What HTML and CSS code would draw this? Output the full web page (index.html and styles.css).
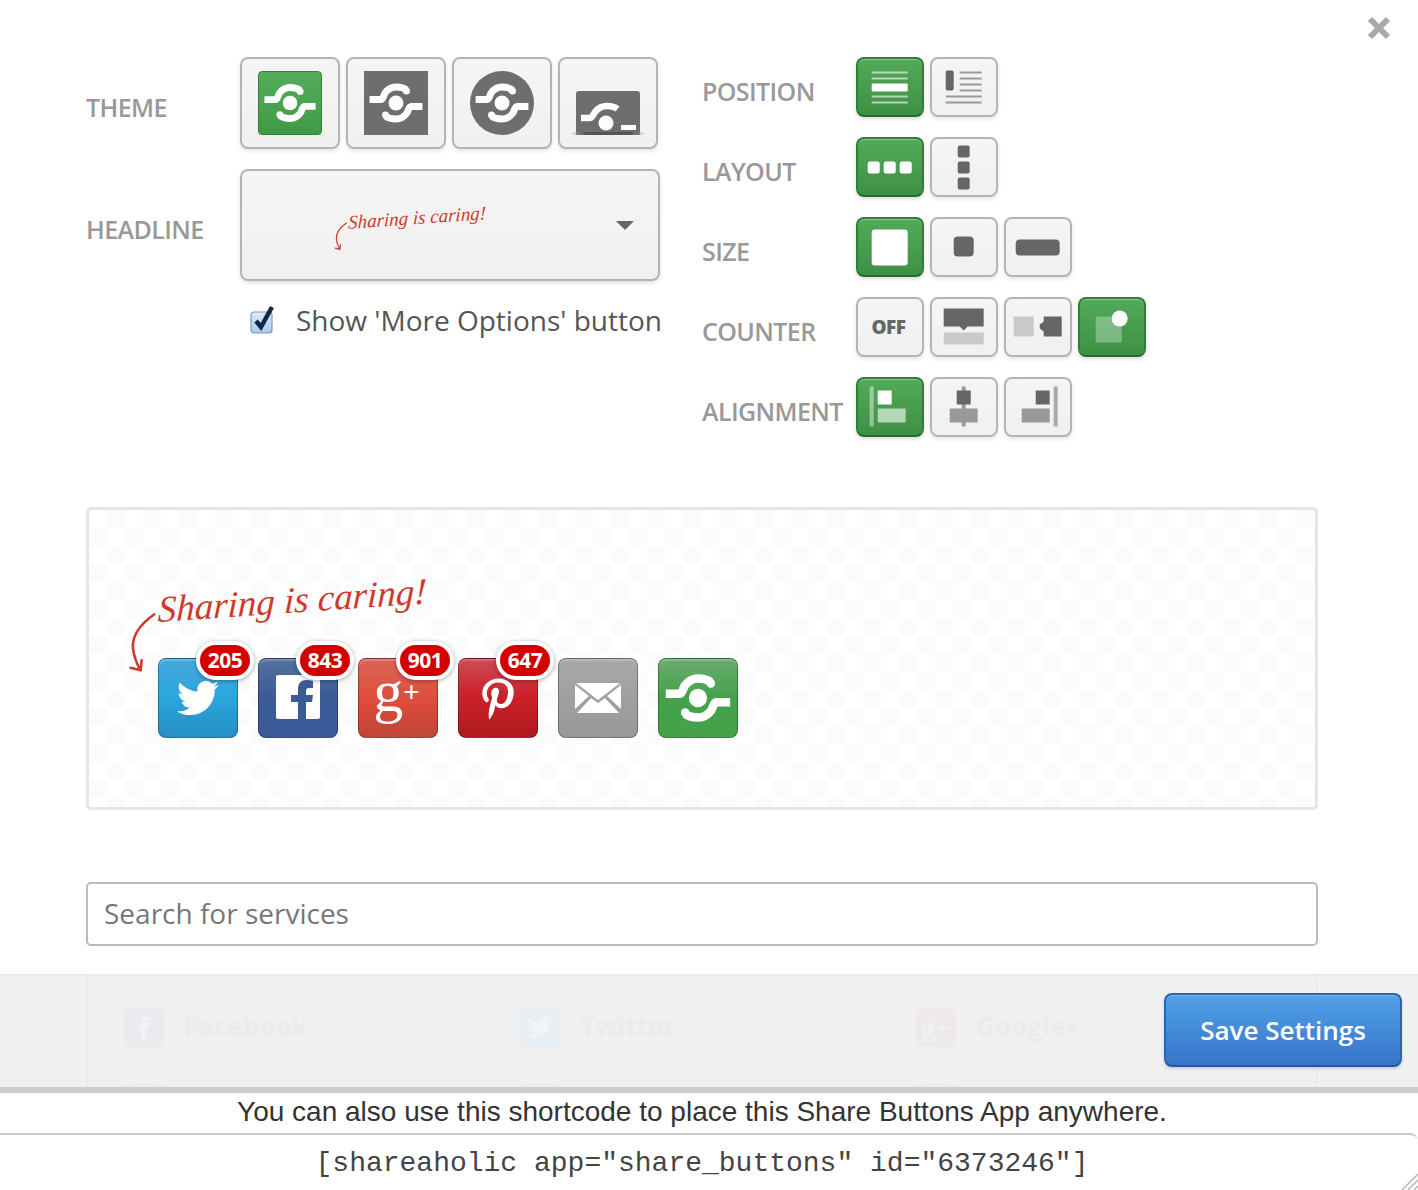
FILE: index.html
```html
<!DOCTYPE html>
<html lang="en">
<head>
    <meta charset="UTF-8">
    <meta name="viewport" content="width=device-width, initial-scale=1.0">
    <title>Share Buttons Settings</title>
    <link rel="stylesheet" href="styles.css">
</head>
<body>

    <svg class="defs" width="0" height="0">
        <symbol id="logo" viewBox="0 0 64 64">
            <g id="logo-half">
                <path d="M5.6 28.6H17C19 28.6 19.5 25 21 22 24 18 28 16 32 16 37 16 40 17 42.5 19" fill="none" stroke="currentColor" stroke-width="7"/>
                <circle cx="42.5" cy="20" r="3.5" fill="currentColor"/>
            </g>
            <use href="#logo-half" transform="rotate(180 32 32)"/>
            <circle cx="32" cy="32" r="7.5" fill="currentColor"/>
        </symbol>
        <symbol id="arrow-path" viewBox="0 0 40 80">
            <path d="M31 5C14 17 4 30 6 46c1 9 4 16 8 24M3 68l12 3 1-12" fill="none" stroke="currentColor" stroke-width="3" stroke-linecap="round" stroke-linejoin="round"/>
        </symbol>
    </svg>

    <svg class="close-icon" width="24" height="24" viewBox="0 0 24 24">
        <path d="M3 3l18 18M21 3L3 21" stroke="#a9a9a9" stroke-width="6"/>
    </svg>

    <div class="settings">
        <div class="settings-left">
            <div class="left-row">
                <div class="label">Theme</div>
                <div class="btn-row">
                    <div class="theme-btn">
                        <svg class="tile tile-green" width="64" height="64"><use href="#logo"/></svg>
                    </div>
                    <div class="theme-btn">
                        <svg class="tile tile-gray" width="64" height="64"><use href="#logo"/></svg>
                    </div>
                    <div class="theme-btn">
                        <svg class="tile tile-gray tile-round" width="64" height="64"><use href="#logo"/></svg>
                    </div>
                    <div class="theme-btn">
                        <svg width="76" height="64" viewBox="-6 0 76 64">
                            <defs>
                                <linearGradient id="stripFade" x1="0" y1="0" x2="1" y2="0">
                                    <stop offset="0" stop-color="#bbb" stop-opacity="0"/>
                                    <stop offset=".2" stop-color="#555"/>
                                    <stop offset=".8" stop-color="#555"/>
                                    <stop offset="1" stop-color="#bbb" stop-opacity="0"/>
                                </linearGradient>
                            </defs>
                            <path d="M0 64V23q0-3 3-3h58q3 0 3 3v41z" fill="#6e6e6e"/>
                            <path d="M5 47H14C16 47 17 44 19 41 22 37 27 35 31 35 36 35 39 36 41.5 38" fill="none" stroke="#fff" stroke-width="6.5"/>
                            <circle cx="30" cy="52" r="7.5" fill="#fff"/>
                            <rect x="45" y="54" width="15" height="5" fill="#fff"/>
                            <rect x="-6" y="61" width="76" height="3" fill="url(#stripFade)"/>
                        </svg>
                    </div>
                </div>
            </div>
            <div class="left-row">
                <div class="label">Headline</div>
                <div class="headline-select">
                    <svg class="mini-arrow" width="16" height="42"><use href="#arrow-path"/></svg>
                    <span class="hand hand-small">Sharing is caring!</span>
                    <span class="caret"></span>
                </div>
            </div>
            <div class="more-options">
                <svg class="checkbox" width="26" height="30" viewBox="0 0 26 30">
                    <defs>
                        <linearGradient id="checkFill" x1="0" y1="0" x2="0" y2="1">
                            <stop offset="0" stop-color="#dfecfa"/>
                            <stop offset="1" stop-color="#a3c9f1"/>
                        </linearGradient>
                    </defs>
                    <rect x="1" y="7" width="21" height="21" rx="3" fill="url(#checkFill)" stroke="#8d97a3" stroke-width="1.2"/>
                    <path d="M6 16l5 6 11-20" fill="none" stroke="#13264a" stroke-width="4.5"/>
                </svg>
                <span>Show 'More Options' button</span>
            </div>
        </div>

        <div class="settings-right">
            <div class="right-row">
                <div class="label">Position</div>
                <div class="opt-btn active">
                    <svg width="64" height="56">
                        <g fill="#fff">
                            <rect x="13" y="12" width="36" height="2" opacity=".6"/>
                            <rect x="13" y="18" width="36" height="2" opacity=".6"/>
                            <rect x="13" y="24" width="36" height="8" rx="1"/>
                            <rect x="13" y="36" width="36" height="2" opacity=".6"/>
                            <rect x="13" y="42" width="36" height="2" opacity=".6"/>
                        </g>
                    </svg>
                </div>
                <div class="opt-btn">
                    <svg width="64" height="56">
                        <rect x="13" y="11" width="8" height="20" rx="2" fill="#666"/>
                        <g fill="#999">
                            <rect x="27" y="12" width="22" height="2"/>
                            <rect x="27" y="18" width="22" height="2"/>
                            <rect x="27" y="24" width="22" height="2"/>
                            <rect x="27" y="30" width="22" height="2"/>
                            <rect x="13" y="36" width="36" height="2"/>
                            <rect x="13" y="42" width="36" height="2"/>
                        </g>
                    </svg>
                </div>
            </div>
            <div class="right-row">
                <div class="label">Layout</div>
                <div class="opt-btn active">
                    <svg width="64" height="56">
                        <g fill="#fff">
                            <rect x="9" y="22" width="12" height="12" rx="2"/>
                            <rect x="25" y="22" width="12" height="12" rx="2"/>
                            <rect x="41" y="22" width="12" height="12" rx="2"/>
                        </g>
                    </svg>
                </div>
                <div class="opt-btn">
                    <svg width="64" height="56">
                        <g fill="#666">
                            <rect x="25" y="6" width="12" height="12" rx="2"/>
                            <rect x="25" y="22" width="12" height="12" rx="2"/>
                            <rect x="25" y="38" width="12" height="12" rx="2"/>
                        </g>
                    </svg>
                </div>
            </div>
            <div class="right-row">
                <div class="label">Size</div>
                <div class="opt-btn active">
                    <svg width="64" height="56"><rect x="13" y="10" width="36" height="36" rx="3" fill="#fff"/></svg>
                </div>
                <div class="opt-btn">
                    <svg width="64" height="56"><rect x="21" y="17" width="20" height="20" rx="4" fill="#666"/></svg>
                </div>
                <div class="opt-btn">
                    <svg width="64" height="56"><rect x="9" y="20" width="44" height="16" rx="4" fill="#666"/></svg>
                </div>
            </div>
            <div class="right-row">
                <div class="label">Counter</div>
                <div class="opt-btn"><span class="off-text">OFF</span></div>
                <div class="opt-btn">
                    <svg width="64" height="56">
                        <path d="M11 9h40v18H35l-4 4-4-4H11z" fill="#666"/>
                        <rect x="11" y="33" width="40" height="12" fill="#c9c9c9"/>
                    </svg>
                </div>
                <div class="opt-btn">
                    <svg width="64" height="56">
                        <rect x="7" y="17" width="20" height="20" fill="#c9c9c9"/>
                        <path d="M37 17h18v20H37v-5l-4-3v-4l4-3z" fill="#666"/>
                    </svg>
                </div>
                <div class="opt-btn active">
                    <svg width="64" height="56">
                        <rect x="15" y="17" width="26" height="26" fill="#fff" opacity=".3"/>
                        <circle cx="39" cy="19" r="8" fill="#fff"/>
                    </svg>
                </div>
            </div>
            <div class="right-row">
                <div class="label">Alignment</div>
                <div class="opt-btn active">
                    <svg width="64" height="56">
                        <rect x="11" y="7" width="4" height="40" fill="#fff" opacity=".45"/>
                        <rect x="19" y="11" width="14" height="14" fill="#fff"/>
                        <rect x="19" y="29" width="28" height="14" fill="#fff" opacity=".6"/>
                    </svg>
                </div>
                <div class="opt-btn">
                    <svg width="64" height="56">
                        <rect x="29" y="7" width="4" height="40" fill="#999"/>
                        <rect x="24" y="11" width="14" height="14" fill="#666"/>
                        <rect x="17" y="29" width="28" height="14" fill="#999"/>
                    </svg>
                </div>
                <div class="opt-btn">
                    <svg width="64" height="56">
                        <rect x="47" y="7" width="4" height="40" fill="#aaa"/>
                        <rect x="29" y="11" width="14" height="14" fill="#666"/>
                        <rect x="15" y="29" width="28" height="14" fill="#999"/>
                    </svg>
                </div>
            </div>
        </div>
    </div>

    <div class="preview">
        <div class="preview-headline">
            <svg class="big-arrow" width="34" height="72"><use href="#arrow-path"/></svg>
            <span class="hand hand-big">Sharing is caring!</span>
        </div>
        <div class="share-row">
            <div class="share-icon twitter">
                <svg width="42" height="42" viewBox="0 0 24 24"><path fill="#fff" d="M23.953 4.57a10 10 0 01-2.825.775 4.958 4.958 0 002.163-2.723c-.951.555-2.005.959-3.127 1.184a4.92 4.92 0 00-8.384 4.482C7.69 8.095 4.067 6.13 1.64 3.162a4.822 4.822 0 00-.666 2.475c0 1.71.87 3.213 2.188 4.096a4.904 4.904 0 01-2.228-.616v.06a4.923 4.923 0 003.946 4.827 4.996 4.996 0 01-2.212.085 4.936 4.936 0 004.604 3.417 9.867 9.867 0 01-6.102 2.105c-.39 0-.779-.023-1.17-.067a13.995 13.995 0 007.557 2.209c9.053 0 13.998-7.496 13.998-13.985 0-.21 0-.42-.015-.63A9.935 9.935 0 0024 4.59z"/></svg>
                <span class="badge">205</span>
            </div>
            <div class="share-icon facebook">
                <svg width="44" height="44" viewBox="0 0 44 44">
                    <rect width="44" height="44" rx="2" fill="#fff"/>
                    <path d="M30 44V27h6l1-7h-7v-4c0-2 1-3 3-3h4V6c-1 0-3-1-6-1-6 0-9 3-9 9v6h-7v7h7v17z" fill="#3b5a98"/>
                </svg>
                <span class="badge">843</span>
            </div>
            <div class="share-icon google">
                <span class="gplus">g<sup>+</sup></span>
                <span class="badge">901</span>
            </div>
            <div class="share-icon pinterest">
                <svg class="pin-glyph" width="32" height="42" viewBox="0 0 384 512"><path fill="#fff" d="M204 6.5C101.4 6.5 0 74.9 0 185.6 0 256 39.6 296 63.6 296c9.9 0 15.6-27.6 15.6-35.4 0-9.3-23.7-29.1-23.7-67.8 0-80.4 61.2-137.4 140.4-137.4 68.1 0 118.5 38.7 118.5 109.8 0 53.1-21.3 152.7-90.3 152.7-24.9 0-46.2-18-46.2-43.8 0-37.8 26.4-74.4 26.4-113.4 0-66.2-93.9-54.2-93.9 25.8 0 16.8 2.1 35.4 9.6 50.7-13.8 59.4-42 147.9-42 209.1 0 18.9 2.7 37.5 4.5 56.4 3.4 3.8 1.7 3.4 6.9 1.5 50.4-69 48.6-82.5 71.4-172.8 12.3 23.4 44.1 36 69.3 36 106.2 0 153.9-103.5 153.9-196.8C384 71.3 298.2 6.5 204 6.5z"/></svg>
                <span class="badge">647</span>
            </div>
            <div class="share-icon email">
                <svg width="46" height="32" viewBox="0 0 46 32">
                    <path d="M1 1h44L23 18z" fill="#fff"/>
                    <path d="M0 3l14 11L0 27zM46 3L32 14l14 13z" fill="#fff"/>
                    <path d="M2 31l14-15 7 5 7-5 14 15z" fill="#fff"/>
                </svg>
            </div>
            <div class="share-icon more">
                <svg width="78" height="78"><use href="#logo"/></svg>
            </div>
        </div>
    </div>

    <div class="search-box">Search for services</div>

    <div class="save-bar">
        <div class="service-list">
            <div class="service"><span class="service-tile tile-fb">f</span>Facebook</div>
            <div class="service">
                <span class="service-tile tile-tw">
                    <svg width="26" height="26" viewBox="0 0 24 24"><path fill="#f1f4f6" d="M23.953 4.57a10 10 0 01-2.825.775 4.958 4.958 0 002.163-2.723c-.951.555-2.005.959-3.127 1.184a4.92 4.92 0 00-8.384 4.482C7.69 8.095 4.067 6.13 1.64 3.162a4.822 4.822 0 00-.666 2.475c0 1.71.87 3.213 2.188 4.096a4.904 4.904 0 01-2.228-.616v.06a4.923 4.923 0 003.946 4.827 4.996 4.996 0 01-2.212.085 4.936 4.936 0 004.604 3.417 9.867 9.867 0 01-6.102 2.105c-.39 0-.779-.023-1.17-.067a13.995 13.995 0 007.557 2.209c9.053 0 13.998-7.496 13.998-13.985 0-.21 0-.42-.015-.63A9.935 9.935 0 0024 4.59z"/></svg>
                </span>
                Twitter
            </div>
            <div class="service"><span class="service-tile tile-gp">g+</span>Google+</div>
            <div class="service"><span class="service-tile"></span></div>
            <div class="service"><span class="service-tile"></span></div>
            <div class="service"><span class="service-tile"></span></div>
        </div>
        <div class="save-btn">Save Settings</div>
    </div>

    <div class="shortcode">
        <div class="shortcode-note">You can also use this shortcode to place this Share Buttons App anywhere.</div>
        <div class="shortcode-field">[shareaholic app="share_buttons" id="6373246"]</div>
        <svg class="resize-grip" width="18" height="18" viewBox="0 0 18 18">
            <path d="M18 2L2 18M18 8l-10 10M18 14l-4 4" stroke="#b5b5b5" stroke-width="1.5"/>
        </svg>
    </div>

</body>
</html>
```

FILE: styles.css
```css
* {
    box-sizing: border-box;
}
html, body {
    margin: 0;
    height: 1190px;
    overflow: hidden;
}
body {
    font-family: "Open Sans", sans-serif;
    background: white;
    color: #555;
    position: relative;
}
.defs {
    position: absolute;
}
.close-icon {
    position: absolute;
    top: 16px;
    left: 1367px;
}

/* settings */
.settings {
    display: flex;
    padding: 57px 0 0 86px;
    height: 437px;
}
.settings-left {
    width: 616px;
}
.left-row {
    display: flex;
    align-items: center;
    margin-bottom: 20px;
}
.label {
    font-size: 25px;
    font-weight: 600;
    color: #999;
    text-transform: uppercase;
    letter-spacing: -0.6px;
    width: 154px;
    flex-shrink: 0;
    padding-top: 8px;
}
.btn-row {
    display: flex;
    gap: 6px;
}
.theme-btn, .opt-btn, .headline-select {
    background: linear-gradient(#f5f5f5, #f0f0f0);
    border: 2px solid #b4b4b4;
    border-radius: 8px;
    box-shadow: 0 2px 4px rgba(0, 0, 0, 0.12);
}
.theme-btn {
    width: 100px;
    height: 92px;
    display: flex;
    align-items: center;
    justify-content: center;
}
.tile {
    color: white;
}
.tile-green {
    background: linear-gradient(#55ad5a, #3f9a46);
    border: 1px solid #348039;
    border-radius: 4px;
}
.tile-gray {
    background: #6e6e6e;
}
.tile-round {
    border-radius: 50%;
}
.headline-select {
    width: 420px;
    height: 112px;
    display: flex;
    align-items: center;
    padding: 0 24px 0 92px;
    color: #d0392b;
}
.mini-arrow {
    margin: 24px 0 0 0;
    flex-shrink: 0;
}
.hand {
    font-family: "Liberation Serif", serif;
    font-style: italic;
    color: #cf3a2b;
    display: inline-block;
    white-space: nowrap;
}
.hand-small {
    font-size: 19px;
    transform: rotate(-4deg) skewX(-6deg);
    margin: -14px 0 0 -2px;
}
.caret {
    margin-left: auto;
    border-left: 9px solid transparent;
    border-right: 9px solid transparent;
    border-top: 9px solid #666;
}
.more-options {
    display: flex;
    align-items: flex-start;
    gap: 20px;
    padding-left: 164px;
    margin-top: -2px;
    font-size: 28px;
    color: #555;
}
.checkbox {
    margin-top: 6px;
    flex-shrink: 0;
}
.more-options span {
    white-space: nowrap;
    line-height: 42px;
}
.settings-right {
    display: flex;
    flex-direction: column;
    gap: 20px;
}
.right-row {
    display: flex;
    align-items: center;
    gap: 6px;
    height: 60px;
}
.right-row .label {
    width: 148px;
    padding-top: 0;
    margin-top: 8px;
}
.opt-btn {
    width: 68px;
    height: 60px;
    display: flex;
    align-items: center;
    justify-content: center;
}
.opt-btn svg {
    transform: translate(0.7px, 0.5px);
}
.opt-btn.active {
    background: linear-gradient(#52ab59, #3e8f45);
    border-color: #2f7f37;
    border-bottom-color: #276b2e;
    box-shadow: inset 0 1px 0 rgba(255, 255, 255, 0.35), 0 2px 4px rgba(0, 0, 0, 0.15);
}
.off-text {
    font-size: 19px;
    font-weight: 800;
    color: #666;
    letter-spacing: -0.6px;
    margin-right: 3px;
}

/* preview */
.preview {
    margin: 70px 0 0 86px;
    width: 1232px;
    height: 303px;
    border: 3px solid #e6e6e6;
    border-radius: 5px;
    background: repeating-conic-gradient(#fbfbfb 0 25%, white 0 50%) 0 0 / 36px 36px;
    padding: 60px 0 0 69px;
}
.preview-headline {
    position: relative;
    height: 88px;
}
.big-arrow {
    position: absolute;
    left: -30px;
    top: 38px;
    color: #cf3a2b;
}
.hand-big {
    font-size: 37px;
    transform: rotate(-4deg) skewX(-6deg);
    margin-top: 18px;
    transform-origin: left center;
}
.share-row {
    display: flex;
    gap: 20px;
}
.share-icon {
    width: 80px;
    height: 80px;
    border-radius: 8px;
    border: 1px solid rgba(0, 0, 0, 0.3);
    box-shadow: inset 0 2px 0 rgba(255, 255, 255, 0.2);
    position: relative;
    display: flex;
    align-items: center;
    justify-content: center;
}
.twitter {
    background: linear-gradient(#45a9df, #2aa5de 50%, #268fc2);
}
.facebook {
    background: linear-gradient(#55719f, #3b5a98 50%, #3b5a98);
    align-items: flex-end;
    padding-bottom: 18px;
}
.google {
    background: linear-gradient(#dd6557, #dc4a38 60%, #bd4738);
}
.pinterest {
    background: linear-gradient(#ce4a55, #cb2027 50%, #ae1a20);
}
.pin-glyph {
    margin-top: 2px;
}
.email {
    background: linear-gradient(#a8a8ab, #98989b);
}
.more {
    background: linear-gradient(#6aab6e, #44a24b 50%, #44a24b);
    color: white;
}
.badge {
    position: absolute;
    left: 37px;
    top: -18px;
    width: 58px;
    height: 39px;
    border: 4px solid white;
    border-radius: 20px;
    background: #d40000;
    color: white;
    font-size: 21px;
    font-weight: 700;
    letter-spacing: -0.5px;
    text-align: center;
    line-height: 31px;
    box-shadow: 0 1px 4px rgba(0, 0, 0, 0.35);
}
.gplus {
    font-family: "Liberation Serif", serif;
    font-size: 60px;
    color: white;
    line-height: 1;
    margin: -14px 0 0 -3px;
    white-space: nowrap;
}
.gplus sup {
    font-family: "Liberation Sans", sans-serif;
    font-size: 28px;
    vertical-align: 10px;
    line-height: 0;
    font-weight: 400;
}

/* search */
.search-box {
    margin: 72px 0 0 86px;
    width: 1232px;
    height: 64px;
    border: 2px solid #bbb;
    border-radius: 5px;
    padding-left: 16px;
    font-size: 28px;
    line-height: 58px;
    color: #777;
}

/* save bar */
.save-bar {
    margin-top: 28px;
    height: 113px;
    background: #f0f0f0;
    border-top: 1px solid #e8e8e8;
    position: relative;
    overflow: hidden;
}
.service-list {
    margin-left: 86px;
    width: 1232px;
    height: 200px;
    border: 2px solid #ebebeb;
    padding: 30px 0 0 36px;
    display: grid;
    grid-template-columns: repeat(3, 396px);
    grid-auto-rows: 76px;
}
.service {
    display: flex;
    align-items: flex-start;
    gap: 20px;
    font-size: 26px;
    font-weight: 700;
    line-height: 38px;
    color: #ebebeb;
}
.service-tile {
    width: 40px;
    height: 40px;
    border-radius: 6px;
    background: #ebecee;
    color: #f3f3f3;
    text-align: center;
    font-size: 28px;
    line-height: 42px;
}
.tile-fb {
    background: #e9ebee;
}
.tile-tw {
    background: #e8eef2;
    display: flex;
    align-items: center;
    justify-content: center;
}
.tile-gp {
    background: #efeaea;
    font-family: "Liberation Serif", serif;
    font-weight: 400;
}
.save-btn {
    position: absolute;
    left: 1164px;
    top: 18px;
    width: 238px;
    height: 74px;
    border: 2px solid #2b66ad;
    border-bottom-color: #24589a;
    border-radius: 8px;
    background: linear-gradient(#51a1e8, #3874c9);
    box-shadow: inset 0 1px 0 rgba(255, 255, 255, 0.25), 0 2px 3px rgba(0, 0, 0, 0.15);
    color: white;
    font-size: 26px;
    font-weight: 600;
    text-align: center;
    line-height: 70px;
}

/* shortcode */
.shortcode {
    border-top: 6px solid #ccc;
    position: relative;
}
.shortcode-note {
    height: 40px;
    padding-right: 14px;
    font-family: "Liberation Sans", sans-serif;
    font-size: 28px;
    line-height: 38px;
    color: #333;
    text-align: center;
}
.shortcode-field {
    height: 57px;
    padding-right: 14px;
    border-top: 2px solid #ccc;
    border-top-right-radius: 8px;
    font-family: "Liberation Mono", monospace;
    font-size: 28px;
    line-height: 58px;
    color: #444;
    text-align: center;
}
.resize-grip {
    position: absolute;
    right: 0;
    bottom: 0;
}
```
